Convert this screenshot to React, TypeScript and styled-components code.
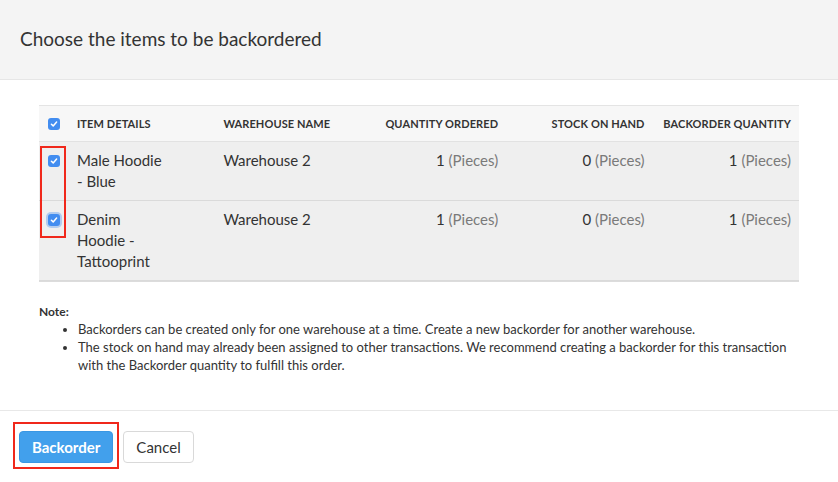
import React from "react";
import styled, { createGlobalStyle } from "styled-components";

const GlobalStyle = createGlobalStyle`
  html, body { margin: 0; padding: 0; background: #ffffff; }
  body { font-family: Lato, "Open Sans", "Liberation Sans", sans-serif; color: #333333; }
  * { box-sizing: border-box; }
`;

const Modal = styled.div`
  width: 838px;
  height: 482px;
  display: flex;
  flex-direction: column;
  background: #ffffff;
`;

const Header = styled.header`
  height: 80px;
  display: flex;
  align-items: center;
  padding: 0 20px;
  background: #f4f4f4;
  border-bottom: 1px solid #e6e6e6;
`;

const Title = styled.h1`
  margin: 0;
  font-size: 19px;
  font-weight: 400;
  color: #333333;
  padding-bottom: 2px;
`;

const Body = styled.section`
  padding: 25px 39px 0;
  flex: 1;
`;

const Table = styled.div`
  border-top: 1px solid #e4e4e4;
  border-bottom: 1px solid #dcdcdc;
`;

const Row = styled.div<{ $head?: boolean }>`
  display: grid;
  grid-template-columns: 28px repeat(5, 1fr);
  background: ${(p) => (p.$head ? "#f7f7f7" : "#efefef")};
  border-bottom: ${(p) => (p.$head ? "1px solid #e2e2e2" : "1px solid #dadada")};
  &:last-child { border-bottom: none; }
`;

const HeadCell = styled.div<{ $right?: boolean }>`
  height: 35px;
  display: flex;
  align-items: center;
  justify-content: ${(p) => (p.$right ? "flex-end" : "flex-start")};
  padding: 0 8px 0 10px;
  font-size: 11px;
  font-weight: 700;
  color: #333333;
  text-transform: uppercase;
  letter-spacing: 0.1px;
`;

const CheckHeadCell = styled(HeadCell)`
  padding: 0 0 0 9px;
`;

const Cell = styled.div<{ $right?: boolean }>`
  padding: 8px 8px 8px 10px;
  font-size: 15px;
  line-height: 21px;
  color: #333333;
  text-align: ${(p) => (p.$right ? "right" : "left")};
`;

const CheckCell = styled.div`
  padding: 8px 0 8px 9px;
  height: 37px;
  display: flex;
  align-items: center;
`;

const ItemName = styled.span`
  display: block;
  max-width: 90px;
`;

const Unit = styled.span`
  color: #7a7a7a;
`;

const Box = styled.span<{ $focus?: boolean }>`
  width: 12px;
  height: 12px;
  border-radius: 3px;
  background: #428df0;
  display: inline-flex;
  align-items: center;
  justify-content: center;
  box-shadow: ${(p) => (p.$focus ? "0 0 0 2px rgba(66,141,240,0.35)" : "none")};
`;

const Rows = styled.div`
  position: relative;
`;

const Highlight = styled.div`
  position: absolute;
  left: 1px;
  top: 4px;
  width: 26px;
  height: 92px;
  border: 2px solid #f0281b;
  pointer-events: none;
`;

const Note = styled.div`
  margin-top: 21px;
  font-size: 13px;
  line-height: 18px;
  color: #333333;
`;

const NoteTitle = styled.div`
  font-weight: 700;
  font-size: 12px;
  line-height: 17px;
`;

const NoteList = styled.ul`
  margin: 0;
  padding-left: 39px;
  & li { margin: 0; }
`;

const Footer = styled.footer`
  border-top: 1px solid #e8e8e8;
  padding: 20px 19px 19px;
  display: flex;
  gap: 10px;
  height: 72px;
`;

const Frame = styled.span`
  position: relative;
  display: inline-flex;
  &::after {
    content: "";
    position: absolute;
    left: -6px;
    top: -9px;
    right: -6px;
    bottom: -6px;
    border: 2px solid #f0281b;
    pointer-events: none;
  }
`;

const Button = styled.button<{ $primary?: boolean }>`
  height: 32px;
  padding: 0 12px;
  border-radius: 4px;
  font-family: inherit;
  font-size: 15px;
  font-weight: ${(p) => (p.$primary ? 700 : 400)};
  background: ${(p) => (p.$primary ? "#42a0ec" : "#ffffff")};
  color: ${(p) => (p.$primary ? "#ffffff" : "#333333")};
  border: 1px solid ${(p) => (p.$primary ? "#3a97e3" : "#d9d9d9")};
  cursor: pointer;
`;

const Check = ({ focus }: { focus?: boolean }) => (
  <Box $focus={focus}>
    <svg width="8" height="8" viewBox="0 0 8 8">
      <path d="M1.4 4.2 L3.2 5.9 L6.6 2.1" fill="none" stroke="#fff" strokeWidth="1.5" strokeLinecap="round" strokeLinejoin="round" />
    </svg>
  </Box>
);

const items = [
  { name: "Male Hoodie - Blue", wh: "Warehouse 2", ordered: 1, stock: 0, back: 1, focus: false },
  { name: "Denim Hoodie - Tattooprint", wh: "Warehouse 2", ordered: 1, stock: 0, back: 1, focus: true },
];

export default function App() {
  return (
    <Modal>
      <GlobalStyle />
      <Header>
        <Title>Choose the items to be backordered</Title>
      </Header>
      <Body>
        <Table>
          <Row $head>
            <CheckHeadCell><Check /></CheckHeadCell>
            <HeadCell>Item Details</HeadCell>
            <HeadCell>Warehouse Name</HeadCell>
            <HeadCell $right>Quantity Ordered</HeadCell>
            <HeadCell $right>Stock on Hand</HeadCell>
            <HeadCell $right>Backorder Quantity</HeadCell>
          </Row>
          <Rows>
            {items.map((it) => (
              <Row key={it.name}>
                <CheckCell><Check focus={it.focus} /></CheckCell>
                <Cell><ItemName>{it.name}</ItemName></Cell>
                <Cell>{it.wh}</Cell>
                <Cell $right>{it.ordered} <Unit>(Pieces)</Unit></Cell>
                <Cell $right>{it.stock} <Unit>(Pieces)</Unit></Cell>
                <Cell $right>{it.back} <Unit>(Pieces)</Unit></Cell>
              </Row>
            ))}
            <Highlight />
          </Rows>
        </Table>
        <Note>
          <NoteTitle>Note:</NoteTitle>
          <NoteList>
            <li>Backorders can be created only for one warehouse at a time. Create a new backorder for another warehouse.</li>
            <li>The stock on hand may already been assigned to other transactions. We recommend creating a backorder for this transaction with the Backorder quantity to fulfill this order.</li>
          </NoteList>
        </Note>
      </Body>
      <Footer>
        <Frame>
          <Button $primary>Backorder</Button>
        </Frame>
        <Button>Cancel</Button>
      </Footer>
    </Modal>
  );
}
